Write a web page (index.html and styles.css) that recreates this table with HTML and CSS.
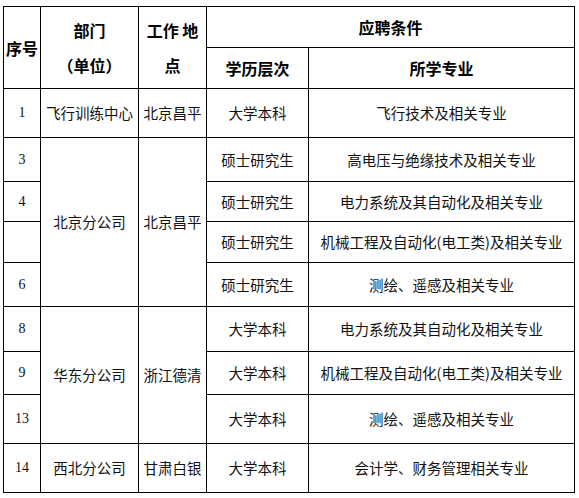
FILE: index.html
```html
<!DOCTYPE html>
<html lang="zh-CN">
<head>
<meta charset="utf-8">
<title>应聘条件</title>
<link rel="stylesheet" href="styles.css">
</head>
<body>
<table class="grid">
  <colgroup>
    <col class="c-no">
    <col class="c-dept">
    <col class="c-place">
    <col class="c-edu">
    <col class="c-major">
  </colgroup>
  <thead>
    <tr class="h-a">
      <th rowspan="2" class="th-no">序号</th>
      <th rowspan="2" class="th-two">部门<br>（单位）</th>
      <th rowspan="2" class="th-two">工作 地<br>点</th>
      <th colspan="2">应聘条件</th>
    </tr>
    <tr class="h-b">
      <th>学历层次</th>
      <th>所学专业</th>
    </tr>
  </thead>
  <tbody>
    <tr class="r49">
      <td class="num">1</td>
      <td>飞行训练中心</td>
      <td>北京昌平</td>
      <td>大学本科</td>
      <td>飞行技术及相关专业</td>
    </tr>
    <tr class="r44">
      <td class="num">3</td>
      <td rowspan="4">北京分公司</td>
      <td rowspan="4">北京昌平</td>
      <td>硕士研究生</td>
      <td>高电压与绝缘技术及相关专业</td>
    </tr>
    <tr class="r40">
      <td class="num">4</td>
      <td>硕士研究生</td>
      <td>电力系统及其自动化及相关专业</td>
    </tr>
    <tr class="r41">
      <td class="num"></td>
      <td>硕士研究生</td>
      <td>机械工程及自动化(电工类)及相关专业</td>
    </tr>
    <tr class="r44">
      <td class="num">6</td>
      <td>硕士研究生</td>
      <td>测绘、遥感及相关专业</td>
    </tr>
    <tr class="r45">
      <td class="num">8</td>
      <td rowspan="3">华东分公司</td>
      <td rowspan="3">浙江德清</td>
      <td>大学本科</td>
      <td>电力系统及其自动化及相关专业</td>
    </tr>
    <tr class="r43">
      <td class="num">9</td>
      <td>大学本科</td>
      <td>机械工程及自动化(电工类)及相关专业</td>
    </tr>
    <tr class="r49">
      <td class="num">13</td>
      <td>大学本科</td>
      <td>测绘、遥感及相关专业</td>
    </tr>
    <tr class="r49">
      <td class="num">14</td>
      <td>西北分公司</td>
      <td>甘肃白银</td>
      <td>大学本科</td>
      <td>会计学、财务管理相关专业</td>
    </tr>
  </tbody>
</table>
</body>
</html>
```

FILE: styles.css
```css
html, body {
  margin: 0;
  padding: 0;
  background: #fff;
}

body {
  font-family: "Noto Sans CJK SC", "Noto Sans", sans-serif;
  color: #000;
}

.grid {
  margin: 6px 0 0 3px;
  border-collapse: collapse;
  table-layout: fixed;
  width: 571px;
  color: #000;
}

.c-no { width: 37px; }
.c-dept { width: 98px; }
.c-place { width: 68px; }
.c-edu { width: 102px; }
.c-major { width: 266px; }

.grid th,
.grid td {
  border: 1px solid #000;
  padding: 0;
  text-align: center;
  vertical-align: middle;
  white-space: nowrap;
  color: #000;
}

.grid th {
  font-size: 16px;
  font-weight: 700;
  line-height: 20px;
}

.grid th.th-two {
  line-height: 35px;
}

.grid td {
  font-size: 14.5px;
  line-height: 20px;
  color: #111;
}

.grid td.num {
  font-family: "Liberation Serif", "Times New Roman", serif;
  font-size: 14px;
}

.h-a { height: 41px; }
.h-b { height: 41px; }
.r40 { height: 40px; }
.r41 { height: 41px; }
.r43 { height: 43px; }
.r44 { height: 44px; }
.r45 { height: 45px; }
.r49 { height: 49px; }
```
